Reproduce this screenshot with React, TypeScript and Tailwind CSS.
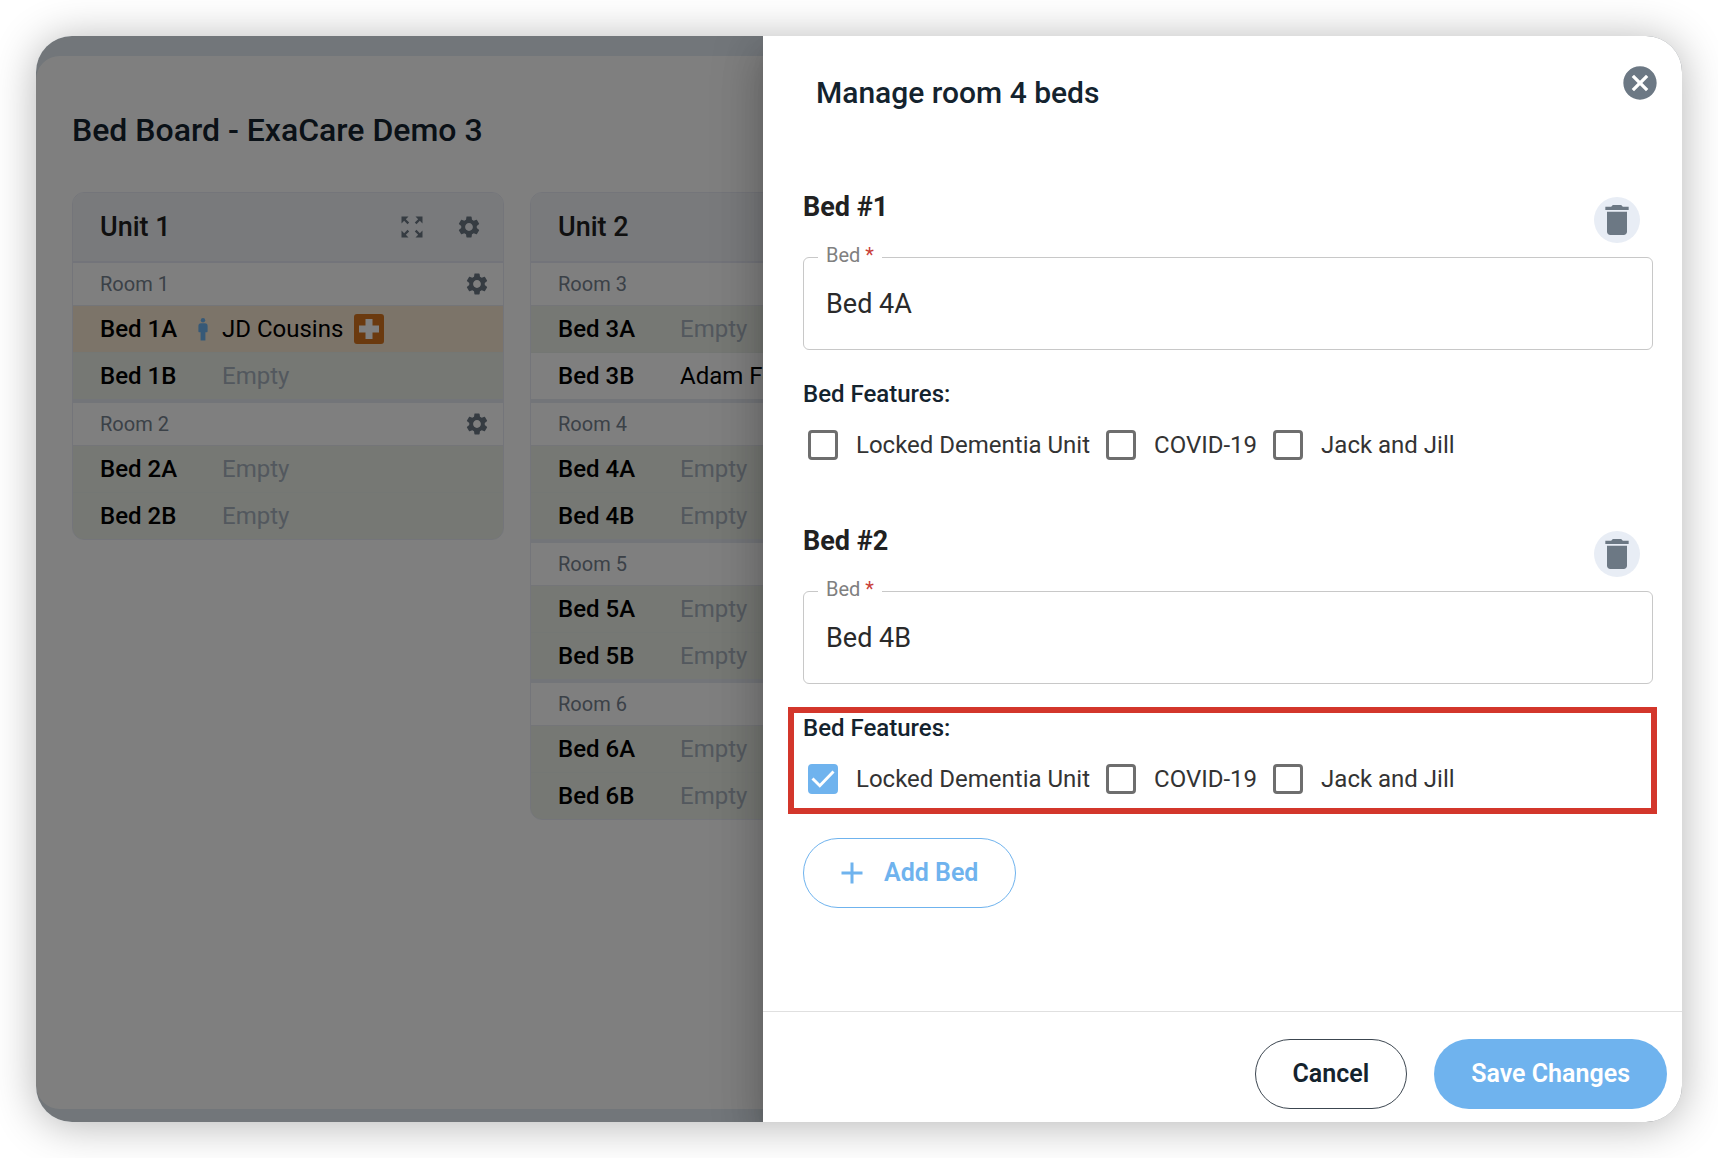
import { useState } from "react";
import { MdAdd, MdCancel, MdDelete, MdSettings, MdZoomOutMap } from "react-icons/md";

type Bed = { name: string; resident?: string; flagged?: boolean };
type Room = { name: string; beds: Bed[] };
type Unit = { name: string; rooms: Room[] };

const units: Unit[] = [
    {
        name: "Unit 1",
        rooms: [
            { name: "Room 1", beds: [{ name: "Bed 1A", resident: "JD Cousins", flagged: true }, { name: "Bed 1B" }] },
            { name: "Room 2", beds: [{ name: "Bed 2A" }, { name: "Bed 2B" }] },
        ],
    },
    {
        name: "Unit 2",
        rooms: [
            { name: "Room 3", beds: [{ name: "Bed 3A" }, { name: "Bed 3B", resident: "Adam Foster" }] },
            { name: "Room 4", beds: [{ name: "Bed 4A" }, { name: "Bed 4B" }] },
            { name: "Room 5", beds: [{ name: "Bed 5A" }, { name: "Bed 5B" }] },
            { name: "Room 6", beds: [{ name: "Bed 6A" }, { name: "Bed 6B" }] },
        ],
    },
];

const features = ["Locked Dementia Unit", "COVID-19", "Jack and Jill"];

function PersonIcon() {
    return (
        <svg viewBox="0 0 10 23" className="w-[10px] h-[23px] text-[#6fb3ee]" fill="currentColor" aria-hidden="true">
            <circle cx="5" cy="2.3" r="2.2" />
            <path d="M3 5.3h4a2.6 2.6 0 0 1 2.6 2.6v5.3c0 .6-.4 1-.9 1H7.4v8.2H2.6v-8.2H1.3c-.5 0-.9-.4-.9-1V7.900a2.600 2.600 0 0 1 2.600-2.600z" />
        </svg>
    );
}

function HospitalBadge() {
    return (
        <svg viewBox="0 0 30 30" className="w-[30px] h-[30px]" aria-hidden="true">
            <rect width="30" height="30" rx="3" fill="#d6741f" />
            <path d="M11.500 5h7v6.500H25v7h-6.500V25h-7v-6.500H5v-7h6.500z" fill="#fff" />
        </svg>
    );
}

function BedRow({ bed }: { bed: Bed }) {
    const bg = bed.flagged ? "bg-[#f8e8d2]" : bed.resident ? "bg-white" : "bg-[#ecf0e9]";
    return (
        <li className={`flex items-center h-[46px] pl-[27px] ${bg}`}>
            <span className="w-[98px] text-[24px] font-medium text-black">{bed.name}</span>
            <span className="w-[24px]">{bed.flagged && <PersonIcon />}</span>
            {bed.resident ? (
                <span className="text-[24px] text-black whitespace-nowrap">{bed.resident}</span>
            ) : (
                <span className="text-[24px] text-[#a6b0bd]">Empty</span>
            )}
            {bed.flagged && <span className="ml-[11px]"><HospitalBadge /></span>}
        </li>
    );
}

function UnitCard({ unit }: { unit: Unit }) {
    return (
        <section className="w-[432px] shrink-0 rounded-xl border border-[#e8ebf5] overflow-hidden">
            <header className="flex items-center h-[70px] pl-[27px] pr-[21px] bg-[#f2f4f8] border-b-2 border-[#e6e8f4]">
                <h2 className="flex-1 text-[27px] font-medium text-[#212121]">{unit.name}</h2>
                <button type="button" aria-label={`Expand ${unit.name}`} className="mr-[30px] text-[#6c7885]">
                    <MdZoomOutMap size={28} />
                </button>
                <button type="button" aria-label={`${unit.name} settings`} className="text-[#6c7885]">
                    <MdSettings size={26} />
                </button>
            </header>
            <div className="flex flex-col gap-1 bg-[#e6eaf2]">
                {unit.rooms.map((room) => (
                    <div key={room.name}>
                        <div className="flex items-center justify-between h-[43px] pl-[27px] pr-[13px] bg-white border-b border-[#e8ebf0]">
                            <h3 className="text-[20px] text-[#76828f]">{room.name}</h3>
                            <button type="button" aria-label={`${room.name} settings`} className="text-[#6c7885]">
                                <MdSettings size={26} />
                            </button>
                        </div>
                        <ul className="flex flex-col gap-px bg-[#e8eee8]">
                            {room.beds.map((bed) => (
                                <BedRow key={bed.name} bed={bed} />
                            ))}
                        </ul>
                    </div>
                ))}
            </div>
        </section>
    );
}

function Feature({ id, label, defaultChecked }: { id: string; label: string; defaultChecked: boolean }) {
    return (
        <div className="flex items-center gap-[18px]">
            <span className="relative h-[30px] w-[30px]">
                <input
                    id={id}
                    type="checkbox"
                    defaultChecked={defaultChecked}
                    className="peer block h-[30px] w-[30px] appearance-none rounded-[4px] border-[3px] border-[#6e6e6e] bg-white checked:border-[#6fb3ee] checked:bg-[#6fb3ee]"
                />
                <svg viewBox="0 0 30 30" className="pointer-events-none absolute inset-0 hidden peer-checked:block" aria-hidden="true">
                    <path d="M4.500 14.500l7.300 7.200L25.500 7.500" fill="none" stroke="#fff" strokeWidth="2.900" />
                </svg>
            </span>
            <label htmlFor={id} className="text-[24px] leading-[30px] text-[#333]">{label}</label>
        </div>
    );
}

function BedForm({ index, name, checked, highlighted }: { index: number; name: string; checked: string[]; highlighted?: boolean }) {
    const [value, setValue] = useState(name);
    const fieldId = `bed-${index}`;
    return (
        <section>
            <div className="flex items-center justify-between h-[60px] pr-[13px]">
                <h3 className="self-start text-[27px] leading-[34px] font-bold text-[#212121]">Bed #{index}</h3>
                <button type="button" aria-label={`Delete bed ${index}`} className="flex items-center justify-center w-[46px] h-[46px] rounded-full bg-[#e8edf5] text-[#6c7884]">
                    <MdDelete size={40} />
                </button>
            </div>
            <div className="relative mt-[7px]">
                <label htmlFor={fieldId} className="absolute left-[15px] -top-4 px-2 bg-white text-[20px] leading-7 text-[#808080]">
                    Bed <span className="text-[#c9403a]">*</span>
                </label>
                <input
                    id={fieldId}
                    type="text"
                    required
                    value={value}
                    onChange={(e) => setValue(e.target.value)}
                    className="block w-full h-[93px] px-[22px] pt-px rounded-md border border-[#c8c8c8] text-[27px] text-[#2a2a2a] outline-none"
                />
            </div>
            <div className="relative mt-7">
                {highlighted && <div className="pointer-events-none absolute -top-[5px] -bottom-5 -left-[15px] -right-1 border-6 border-[#d3362b]"></div>}
                <h4 className="text-[24px] leading-8 font-medium text-[#14232e]">Bed Features:</h4>
                <div className="flex flex-wrap gap-4 mt-5 pl-[5px]">
                    {features.map((label, i) => (
                        <Feature key={label} id={`${fieldId}-feature-${i}`} label={label} defaultChecked={checked.includes(label)} />
                    ))}
                </div>
            </div>
        </section>
    );
}

export default function App() {
    return (
        <div className="flex min-h-screen p-9 bg-white font-['Roboto',sans-serif]">
            <div className="flex-1 grid grid-cols-[727fr_919fr] rounded-[36px] overflow-hidden shadow-[0_3px_44px_rgba(0,0,0,0.3)]">
                <main className="relative col-span-2 col-start-1 row-start-1 min-w-0 overflow-hidden pt-5 pb-[13px] bg-[#e4edf4]">
                    <div className="h-full rounded-3xl bg-white px-9 pt-[54px]">
                        <h1 className="text-[32px] leading-10 font-medium text-[#14232e]">Bed Board - ExaCare Demo 3</h1>
                        <div className="flex items-start gap-[26px] mt-[42px]">
                            {units.map((unit) => (
                                <UnitCard key={unit.name} unit={unit} />
                            ))}
                        </div>
                    </div>
                    <div className="absolute inset-0 bg-black/50"></div>
                </main>

                <aside
                    role="dialog"
                    aria-label="Manage room 4 beds"
                    className="relative col-start-2 row-start-1 flex flex-col bg-white shadow-[0_13px_16px_-8px_rgba(0,0,0,0.2),0_26px_40px_3px_rgba(0,0,0,0.14),0_10px_48px_8px_rgba(0,0,0,0.12)]"
                >
                    <header className="flex items-start justify-between pl-[53px] pr-[22px]">
                        <h2 className="pt-[37px] text-[30px] leading-10 font-medium text-[#14232e]">Manage room 4 beds</h2>
                        <button type="button" aria-label="Close" className="mt-[27px] text-[#6c7884]">
                            <MdCancel size={40} />
                        </button>
                    </header>

                    <div className="flex-1 pt-[77px] pb-10 pl-10 pr-[29px]">
                        <div className="flex flex-col gap-16">
                            <BedForm index={1} name="Bed 4A" checked={[]} />
                            <BedForm index={2} name="Bed 4B" checked={["Locked Dementia Unit"]} highlighted />
                        </div>
                        <button type="button" className="flex items-center gap-[14px] mt-11 h-[70px] pl-[30px] pr-[37px] rounded-full border border-[#6fb3ee] text-[25px] font-semibold text-[#6fb3ee]">
                            <MdAdd size={36} />
                            Add Bed
                        </button>
                    </div>

                    <footer className="flex justify-end gap-[27px] pt-[27px] pb-[13px] pr-[15px] border-t border-[#e0e0e0]">
                        <button type="button" className="h-[70px] px-[37px] rounded-full border border-[#3c4650] text-[25px] font-semibold text-[#14232e]">
                            Cancel
                        </button>
                        <button type="button" className="h-[70px] px-[37px] rounded-full bg-[#6fb3ee] text-[25px] font-semibold text-white">
                            Save Changes
                        </button>
                    </footer>
                </aside>
            </div>
        </div>
    );
}
